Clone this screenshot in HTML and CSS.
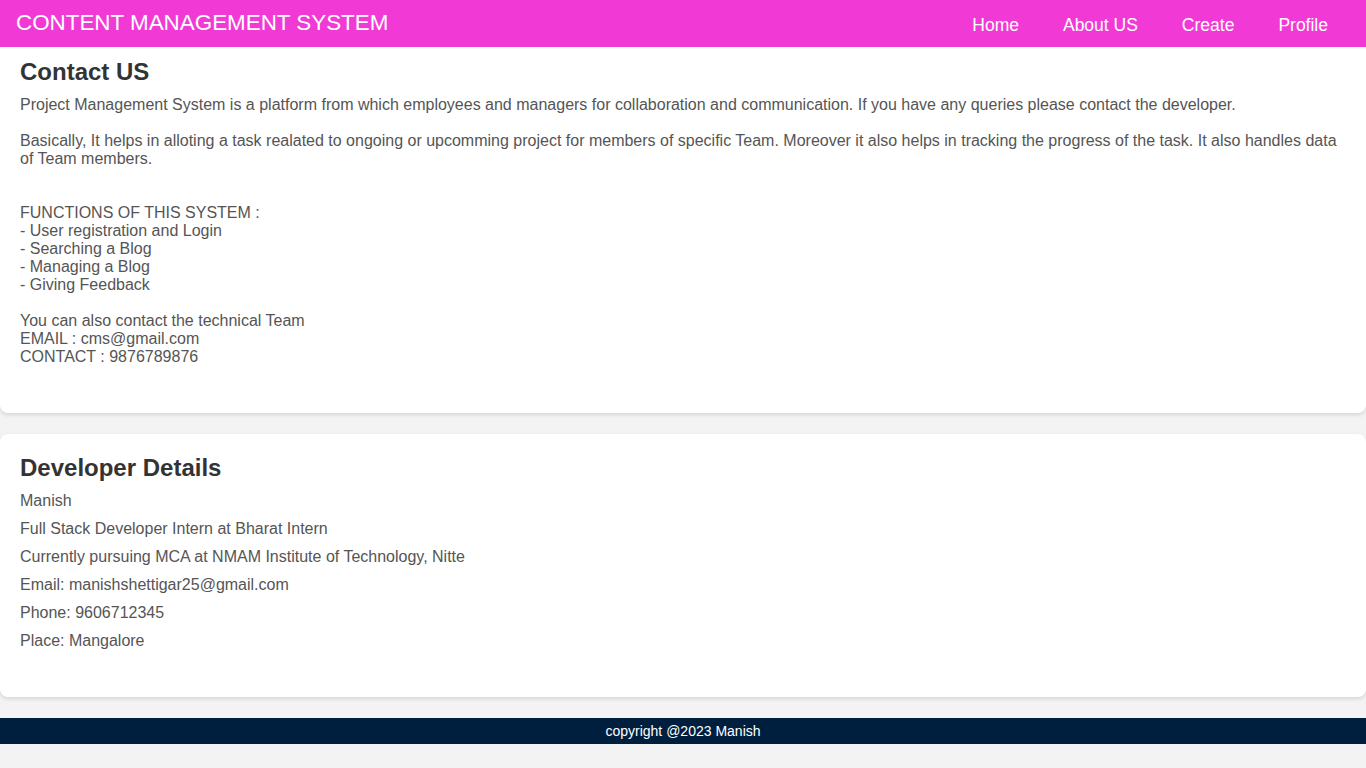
FILE: index.html
```html
<!DOCTYPE html>
<html>
<head>
<meta charset="utf-8">
<title>Contact US</title>
<link rel="stylesheet" href="styles.css">
</head>
<body>
<header class="navbar">
  <div class="brand">CONTENT MANAGEMENT SYSTEM</div>
  <nav class="nav">
    <a href="#">Home</a>
    <a href="#">About US</a>
    <a href="#">Create</a>
    <a href="#">Profile</a>
  </nav>
</header>
<main>
  <section class="card card-first">
    <h2>Contact US</h2>
    <p>Project Management System is a platform from which employees and managers for collaboration and communication. If you have any queries please contact the developer.</p>
    <p>Basically, It helps in alloting a task realated to ongoing or upcomming project for members of specific Team. Moreover it also helps in tracking the progress of the task. It also handles data of Team members.</p>
    <p class="block"><br>FUNCTIONS OF THIS SYSTEM :<br>- User registration and Login<br>- Searching a Blog<br>- Managing a Blog<br>- Giving Feedback<br><br>You can also contact the technical Team<br>EMAIL : cms@gmail.com<br>CONTACT : 9876789876</p>
  </section>
  <section class="card card-dev">
    <h2>Developer Details</h2>
    <p>Manish</p>
    <p>Full Stack Developer Intern at Bharat Intern</p>
    <p>Currently pursuing MCA at NMAM Institute of Technology, Nitte</p>
    <p>Email: manishshettigar25@gmail.com</p>
    <p>Phone: 9606712345</p>
    <p>Place: Mangalore</p>
  </section>
</main>
<footer class="footer">copyright @2023 Manish</footer>
</body>
</html>
```
FILE: styles.css
```css
html, body {
  margin: 0;
  padding: 0;
}
body {
  background: #f3f3f3;
  font-family: "Liberation Sans", Arial, sans-serif;
  color: #555;
}
.navbar {
  height: 47px;
  background: #f13ad5;
  display: flex;
  align-items: center;
  justify-content: space-between;
  padding: 0 16px;
  box-sizing: border-box;
}
.brand {
  color: #fff;
  font-size: 22.4px;
  margin-top: -2px;
}
.nav {
  display: flex;
}
.nav a {
  color: #fff;
  text-decoration: none;
  font-size: 17.5px;
  padding: 0 22px;
  line-height: 20px;
  margin-top: 3px;
}
.card {
  background: #fff;
  border-radius: 8px;
  box-shadow: 0 2px 4px rgba(0, 0, 0, 0.12);
  padding: 20px 20px 47px;
  margin-bottom: 21px;
}
.card-first {
  padding-top: 11px;
  border-top-left-radius: 0;
  border-top-right-radius: 0;
}
.card h2 {
  margin: 0 0 10px;
  font-size: 24px;
  line-height: 28px;
  color: #333;
}
.card p {
  margin: 0;
  font-size: 16px;
  line-height: 18px;
}
.card-first p + p {
  margin-top: 18px;
}
.card-dev p + p {
  margin-top: 10px;
}
.footer {
  background: #001f3f;
  color: #fff;
  text-align: center;
  font-size: 14px;
  height: 26px;
  line-height: 26px;
}
```
